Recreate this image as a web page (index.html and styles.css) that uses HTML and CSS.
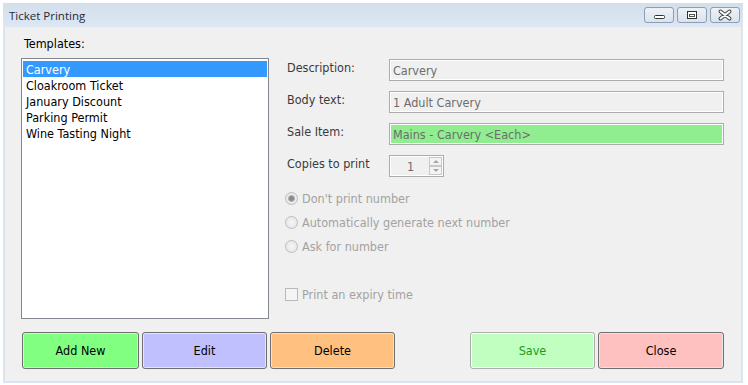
FILE: index.html
```html
<!DOCTYPE html>
<html lang="en">
<head>
    <meta charset="UTF-8">
    <title>Ticket Printing</title>
    <link rel="stylesheet" href="styles.css">
</head>
<body>

<div class="window">
    <div class="titlebar">
        <span class="title">Ticket Printing</span>
        <div class="controls">
            <span class="ctl">
                <svg width="28" height="14" viewBox="0 0 28 14"><rect x="9.5" y="7.5" width="10" height="3" rx="1" fill="#fff" stroke="#333"/></svg>
            </span>
            <span class="ctl">
                <svg width="28" height="14" viewBox="0 0 28 14"><rect x="9.5" y="3.5" width="9" height="7" fill="#fff" stroke="#333"/><rect x="11.5" y="6.5" width="5" height="2" fill="#fff" stroke="#555"/></svg>
            </span>
            <span class="ctl">
                <svg width="28" height="14" viewBox="0 0 28 14"><path d="M9.5 3.5 L18.5 10.5 M18.5 3.5 L9.5 10.5" stroke="#444" stroke-width="4" stroke-linecap="round"/><path d="M9.5 3.5 L18.5 10.5 M18.5 3.5 L9.5 10.5" stroke="#fff" stroke-width="2" stroke-linecap="round"/></svg>
            </span>
        </div>
    </div>

    <div class="content">
        <div class="main">
            <div class="templates">
                <div class="caption">Templates:</div>
                <ul class="list">
                    <li class="selected">Carvery</li>
                    <li>Cloakroom Ticket</li>
                    <li>January Discount</li>
                    <li>Parking Permit</li>
                    <li>Wine Tasting Night</li>
                </ul>
            </div>

            <div class="details">
                <div class="field-row">
                    <label>Description:</label>
                    <div class="field">Carvery</div>
                </div>
                <div class="field-row">
                    <label>Body text:</label>
                    <div class="field">1 Adult Carvery</div>
                </div>
                <div class="field-row">
                    <label>Sale Item:</label>
                    <div class="field sale">Mains - Carvery &lt;Each&gt;</div>
                </div>
                <div class="field-row">
                    <label>Copies to print</label>
                    <div class="spinner">
                        <span class="value">1</span>
                        <span class="arrows">
                            <span class="arrow up"></span>
                            <span class="arrow down"></span>
                        </span>
                    </div>
                </div>

                <div class="options">
                    <div class="option"><span class="radio checked"></span>Don't print number</div>
                    <div class="option"><span class="radio"></span>Automatically generate next number</div>
                    <div class="option"><span class="radio"></span>Ask for number</div>
                </div>
                <div class="option expiry"><span class="check"></span>Print an expiry time</div>
            </div>
        </div>

        <div class="actions">
            <button class="btn add">Add New</button>
            <button class="btn edit">Edit</button>
            <button class="btn delete">Delete</button>
            <button class="btn save">Save</button>
            <button class="btn close">Close</button>
        </div>
    </div>
</div>

</body>
</html>
```

FILE: styles.css
```css
body {
    margin: 0;
    background-color: #fff;
    font-family: "DejaVu Sans Condensed", "DejaVu Sans", sans-serif;
    font-stretch: condensed;
    font-size: 12.5px;
    color: #000;
}
.window {
    margin: 3px 0 0 3px;
    width: 740px;
    height: 380px;
    display: flex;
    flex-direction: column;
}
.titlebar {
    height: 24px;
    flex-shrink: 0;
    display: flex;
    align-items: flex-start;
    background: linear-gradient(#d4dfec, #dde7f3);
}
.title {
    font-family: "Open Sans", sans-serif;
    font-stretch: normal;
    font-size: 11.5px;
    color: #1e2a38;
    padding: 5px 0 0 6px;
}
.controls {
    margin-left: auto;
    display: flex;
    gap: 3px;
    padding: 4px 3px 0 0;
}
.ctl {
    width: 28px;
    height: 14px;
    border: 1px solid #8d9db2;
    border-radius: 3px;
    background: linear-gradient(#eef2f7, #d9e2ee);
    display: flex;
}
.content {
    flex: 1;
    background-color: #f0f0f0;
    border: 2px solid #dae5f2;
    border-top: 0;
    padding: 9px 17px 0 16px;
}
.main {
    display: flex;
    gap: 18px;
}
.templates {
    width: 248px;
}
.caption {
    height: 16px;
    line-height: 16px;
    padding-left: 3px;
    margin-bottom: 6px;
}
.list {
    list-style: none;
    margin: 0;
    height: 261px;
    box-sizing: border-box;
    border: 1px solid #828790;
    background-color: #fff;
    padding: 2px 1px 0 1px;
}
.list li {
    height: 16px;
    line-height: 17px;
    padding-left: 3px;
}
.list li.selected {
    background-color: #3399ff;
    color: #fff;
}
.details {
    flex: 1;
    padding-top: 23px;
    display: flex;
    flex-direction: column;
}
.field-row {
    display: flex;
    height: 22px;
    margin-bottom: 10px;
}
.field-row label {
    width: 102px;
    line-height: 16px;
    padding-top: 1px;
    color: #3a3a3a;
}
.field {
    width: 335px;
    box-sizing: border-box;
    border: 1px solid #acacac;
    box-shadow: inset 0 0 0 1px #fff;
    padding: 0 3px;
    line-height: 21px;
    color: #6d6d6d;
}
.field.sale {
    background-color: #90ee90;
}
.spinner {
    width: 55px;
    box-sizing: border-box;
    border: 1px solid #acacac;
    box-shadow: inset 0 0 0 1px #fff;
    display: flex;
    color: #6d6d6d;
}
.spinner .value {
    flex: 1;
    line-height: 21px;
    text-align: center;
    padding-left: 2px;
}
.arrows {
    width: 13px;
    display: flex;
    flex-direction: column;
    padding: 1px 1px 1px 0;
}
.arrow {
    flex: 1;
    border: 1px solid #c8c8c8;
    background-color: #f4f4f4;
    position: relative;
}
.arrow::after {
    content: "";
    position: absolute;
    left: 3px;
    border-left: 3px solid transparent;
    border-right: 3px solid transparent;
}
.arrow.up::after {
    top: 2px;
    border-bottom: 3px solid #a6a6a6;
}
.arrow.down::after {
    top: 2px;
    border-top: 3px solid #a6a6a6;
}
.options {
    margin-top: -1px;
}
.option {
    height: 24px;
    display: flex;
    align-items: center;
    color: #a2a2a2;
    margin-left: -2px;
}
.radio {
    width: 11px;
    height: 11px;
    border: 1px solid #bdbdbd;
    border-radius: 50%;
    background: radial-gradient(#f6f6f6, #e2e2e2);
    margin-right: 4px;
    position: relative;
}
.radio.checked::after {
    content: "";
    position: absolute;
    left: 2px;
    top: 2px;
    width: 5px;
    height: 5px;
    border-radius: 50%;
    border: 1px solid #b0b0b0;
    background-color: #8a8a8a;
}
.expiry {
    margin-top: 24px;
}
.check {
    width: 11px;
    height: 11px;
    border: 1px solid #b9b9b9;
    background-color: #f4f4f4;
    margin-right: 4px;
}
.actions {
    display: flex;
    margin-top: 13px;
    padding-left: 1px;
}
.btn {
    height: 37px;
    width: 125px;
    margin-right: 3px;
    border: 1px solid #707070;
    border-radius: 3px;
    box-shadow: inset 0 0 0 1px #e6e6e6;
    font: inherit;
    color: #000;
    padding: 0;
}
.btn.add {
    width: 117px;
    background-color: #80ff80;
}
.btn.edit {
    background-color: #c0c0ff;
}
.btn.delete {
    background-color: #ffc080;
}
.btn.save {
    margin-left: auto;
    background-color: #c0ffc0;
    border-color: #adadad;
    box-shadow: inset 0 0 0 1px #fff;
    color: #1a9c1a;
}
.btn.close {
    width: 126px;
    margin-right: 0;
    background-color: #ffc0c0;
}
```
